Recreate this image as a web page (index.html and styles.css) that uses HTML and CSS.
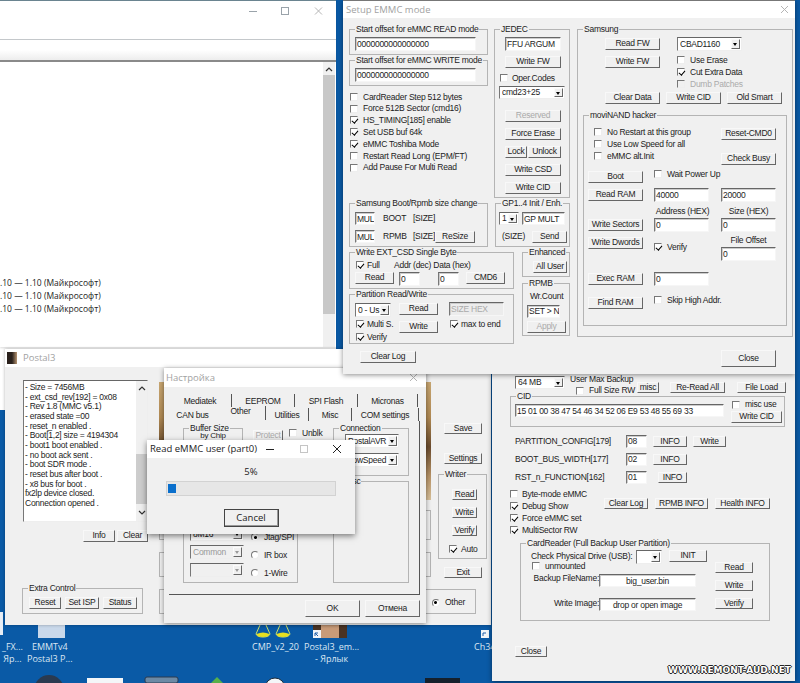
FILE: index.html
```html
<!DOCTYPE html>
<html lang="ru">
<head>
    <meta charset="UTF-8">
    <meta name="viewport" content="width=device-width, initial-scale=1.0">
    <title>Setup EMMC mode</title>
    <link rel="stylesheet" href="styles.css">
</head>
<body>
    <!-- рабочий стол -->
    <svg class="desk-art" width="500" height="73" viewBox="0 610 500 73">
        <rect x="0" y="612" width="3" height="23" fill="#e8eef5"/>
        <rect x="38" y="624" width="27" height="14" fill="#c9d8ea"/>
        <path d="M260 625 L256 634 Q257 637 263 637 Q269 637 270 634 L266 625" fill="none" stroke="#cfe36a"/>
        <path d="M256.500 634 Q263 631 269.500 634 Q269 637 263 637 Q257 637 256.500 634" fill="#e6e020"/>
        <path d="M280 625 L276 634 Q277 637 283 637 Q289 637 290 634 L286 625" fill="none" stroke="#cfe36a"/>
        <path d="M276.500 634 Q283 631 289.500 634 Q289 637 283 637 Q277 637 276.500 634" fill="#e6e020"/>
        <rect x="313" y="625" width="34" height="13" fill="#4a3324"/>
        <rect x="321" y="625" width="18" height="13" fill="#c99b78"/>
        <rect x="313" y="630" width="8" height="8" fill="#f2f5f8"/>
        <path d="M315 636 v-3 h3 M315 633 l3 3" fill="none" stroke="#1f5fa8"/>
        <rect x="481" y="630" width="8" height="8" fill="#f2f5f8"/>
        <path d="M483 636 v-3 h3" fill="none" stroke="#1f5fa8"/>
        <circle cx="49" cy="690" r="15" fill="#2a3a50"/>
        <rect x="87" y="678" width="36" height="5" fill="#f4f6f8"/>
        <rect x="145" y="677" width="33" height="6" rx="2" fill="#6d8aa5" stroke="#2a3a50"/>
        <path d="M217 677 l6 6 h-12 z" fill="#57b04a"/>
        <circle cx="275" cy="688" r="10" fill="#f4f6f8" stroke="#1b2a3a"/>
        <rect x="425" y="678" width="35" height="5" fill="#15202c"/>
    </svg>
    <div class="desk-label label-fx">_FX...<br>Яр...</div>
    <div class="desk-label label-emmt">EMMTv4<br>Postal3 P...</div>
    <div class="desk-label label-cmp">CMP_v2_20</div>
    <div class="desk-label label-postal">Postal3_em...<br>- Ярлык</div>
    <div class="desk-label label-ch">Ch34</div>

    <!-- окно за списком -->
    <div class="window behind"></div>

    <!-- окно со списком -->
    <div class="window explorer">
        <div class="explorer-head">
            <svg class="caption-icon" width="80" height="10" viewBox="0 0 80 10">
                <path d="M1 5.500 h8" stroke="#9aa3aa"/>
                <rect x="33.500" y="1.500" width="7" height="7" fill="none" stroke="#9aa3aa"/>
                <path d="M67 1.500 l7 7 M74 1.500 l-7 7" stroke="#b5b5b5"/>
            </svg>
        </div>
        <div class="explorer-strip"></div>
        <div class="explorer-list">
            <div class="explorer-rows">
                <div>.10 — 1.10 (Майкрософт)</div>
                <div>.10 — 1.10 (Майкрософт)</div>
                <div>.10 — 1.10 (Майкрософт)</div>
            </div>
            <div class="scrollbar">
                <svg class="chev" width="8" height="6" viewBox="0 0 8 6"><path d="M1 5 L4 2 L7 5" fill="none" stroke="#333" stroke-width="1.200"/></svg>
                <div class="scroll-thumb"></div>
            </div>
        </div>
    </div>

    <!-- Postal3 -->
    <div class="window postal">
        <div class="title-bar">
            <span class="postal-icon"></span>
            <span class="title-text">Postal3</span>
        </div>
        <div class="postal-body">
            <div class="postal-left">
                <div class="log">
                    <div class="log-text">
                        - Size = 7456MB<br>
                        - ext_csd_rev[192] = 0x08<br>
                        - Rev 1.8 (MMC v5.1)<br>
                        - erased state =00<br>
                        - reset_n enabled .<br>
                        - Boot[1,2] size = 4194304<br>
                        - boot1 boot enabled .<br>
                        - no boot ack sent .<br>
                        - boot SDR mode .<br>
                        - reset bus after boot .<br>
                        - x8 bus for boot .<br>
                        fx2lp device closed.<br>
                        Connection opened .
                    </div>
                    <div class="log-scroll">
                        <svg class="chev" width="8" height="6" viewBox="0 0 8 6"><path d="M1 5 L4 2 L7 5" fill="none" stroke="#333" stroke-width="1.200"/></svg>
                        <div class="log-thumb"></div>
                        <svg class="chev" width="8" height="6" viewBox="0 0 8 6"><path d="M1 1 L4 4 L7 1" fill="none" stroke="#333" stroke-width="1.200"/></svg>
                    </div>
                </div>
                <div class="log-buttons">
                    <button class="btn w32">Info</button>
                    <button class="btn w31">Clear</button>
                </div>
                <div class="group extra-control">
                    <span class="legend">Extra Control</span>
                    <button class="btn w32">Reset</button>
                    <button class="btn w34">Set ISP</button>
                    <button class="btn w34">Status</button>
                </div>
            </div>
            <div class="postal-main">
                <div class="postal-center">
                    <div class="preview"></div>
                    <div class="ghost-box ghost-a"></div>
                    <div class="ghost-box ghost-b"></div>
                </div>
                <div class="postal-side">
                    <button class="btn w38 side-save">Save</button>
                    <button class="btn w38 side-settings">Settings</button>
                    <div class="group writer">
                        <span class="legend">Writer</span>
                        <button class="btn w25">Read</button>
                        <button class="btn w25">Write</button>
                        <button class="btn w25">Verify</button>
                        <label class="check writer-auto"><input type="checkbox" checked>Auto</label>
                    </div>
                    <button class="btn w38 side-exit">Exit</button>
                </div>
                <div class="ghost-box ghost-c">
                    <label class="check"><input type="radio" checked>Other</label>
                </div>
            </div>
        </div>
    </div>

    <!-- Настройка -->
    <div class="window settings">
        <div class="title-bar settings-title">
            <span class="title-text">Настройка</span>
            <svg width="9" height="9" viewBox="0 0 9 9"><path d="M1 1 L8 8 M8 1 L1 8" stroke="#b5b5b5"/></svg>
        </div>
        <div class="tabs tabs-back">
            <span class="tab w63">Mediatek</span>
            <span class="tab w63">EEPROM</span>
            <span class="tab w63">SPI Flash</span>
            <span class="tab w60">Micronas</span>
        </div>
        <div class="tabs tabs-front">
            <span class="tab w47 tab-plain">CAN bus</span>
            <span class="tab w50 tab-active">Other</span>
            <span class="tab w43">Utilities</span>
            <span class="tab w43">Misc</span>
            <span class="tab w67">COM settings</span>
        </div>
        <div class="tab-panel">
            <div class="panel-left">
                <div class="panel-top">
                    <div class="group buffer">
                        <span class="legend">Buffer Size</span>
                        <div class="buffer-chip">by Chip</div>
                    </div>
                    <button class="btn w30 protect" disabled>Protect</button>
                    <label class="check unblock"><input type="checkbox">Unblk</label>
                </div>
                <div class="group chip-group">
                    <div class="chip-selects">
                        <div class="combo w54"><span class="combo-text">8M16</span><span class="combo-arrow"></span></div>
                        <div class="combo w54 is-disabled"><span class="combo-text">Common</span><span class="combo-arrow"></span></div>
                        <div class="combo w54 is-disabled"><span class="combo-text"></span><span class="combo-arrow"></span></div>
                    </div>
                    <div class="chip-radios">
                        <label class="check"><input type="radio" checked>Jtag/SPI</label>
                        <label class="check"><input type="radio">IR box</label>
                        <label class="check"><input type="radio">1-Wire</label>
                    </div>
                </div>
            </div>
            <div class="panel-right">
                <div class="group connection">
                    <span class="legend">Connection</span>
                    <div class="combo w54"><span class="combo-text">PostalAVR</span><span class="combo-arrow"></span></div>
                    <div class="combo w54"><span class="combo-text">LowSpeed</span><span class="combo-arrow"></span></div>
                </div>
                <div class="group misc-box"><span class="legend">Misc</span></div>
            </div>
        </div>
        <div class="settings-buttons">
            <button class="btn w55 h17">OK</button>
            <button class="btn w55 h17">Отмена</button>
        </div>
    </div>

    <!-- прогресс -->
    <div class="window progress-dialog">
        <div class="progress-title">
            <span>Read eMMC user (part0)</span>
            <svg width="80" height="10" viewBox="0 0 80 10">
                <path d="M4 5.500 h8" stroke="#222"/>
                <rect x="38.500" y="1.500" width="7" height="7" fill="none" stroke="#c5c5c5"/>
                <path d="M71 1 l8 8 M79 1 l-8 8" stroke="#222"/>
            </svg>
        </div>
        <div class="progress-body">
            <div class="progress-label">5%</div>
            <div class="progress-track"><div class="progress-fill" style="width: 5%"></div></div>
            <button class="cancel-btn">Cancel</button>
        </div>
    </div>

    <!-- нижнее окно -->
    <div class="window backup">
        <div class="backup-top">
            <div class="combo w50 h13"><span class="combo-text">64 MB</span><span class="combo-arrow"></span></div>
            <div class="backup-size">
                <div>User Max Backup</div>
                <label class="check full-size"><input type="checkbox">Full Size RW</label>
            </div>
            <button class="btn w22 h11 misc-btn">misc</button>
            <button class="btn w55 h11 reread-btn">Re-Read All</button>
            <button class="btn w49 h11 fileload-btn">File Load</button>
        </div>
        <div class="group cid">
            <span class="legend">CID</span>
            <input class="field cid-field" value="15 01 00 38 47 54 46 34 52 06 E9 53 48 55 69 33">
            <div class="cid-side">
                <label class="check"><input type="checkbox">misc use</label>
                <button class="btn w51">Write CID</button>
            </div>
        </div>
        <div class="regs">
            <span class="reg-name">PARTITION_CONFIG[179]</span>
            <input class="field h13" value="08">
            <button class="btn h11">INFO</button>
            <button class="btn h11">Write</button>
            <span class="reg-name">BOOT_BUS_WIDTH[177]</span>
            <input class="field h13" value="02">
            <button class="btn h11">INFO</button>
            <span></span>
            <span class="reg-name">RST_n_FUNCTION[162]</span>
            <input class="field h13" value="01">
            <button class="btn h11">INFO</button>
        </div>
        <div class="backup-options">
            <div>
                <label class="check"><input type="checkbox">Byte-mode eMMC</label>
                <label class="check"><input type="checkbox" checked>Debug Show</label>
                <label class="check"><input type="checkbox" checked>Force eMMC set</label>
                <label class="check"><input type="checkbox" checked>MultiSector RW</label>
            </div>
            <div class="option-buttons">
                <button class="btn w44 h11">Clear Log</button>
                <button class="btn w53 h11">RPMB INFO</button>
                <button class="btn w55 h11">Health INFO</button>
            </div>
        </div>
        <div class="group card-reader">
            <span class="legend">CardReader (Full Backup User Partition)</span>
            <div class="card-left">
                <div class="card-drive">
                    <span class="card-drive-label">Check Physical Drive (USB):</span>
                    <div class="combo w26 h14"><span class="combo-text"></span><span class="combo-arrow"></span></div>
                    <button class="btn w38">INIT</button>
                </div>
                <label class="check unmounted"><input type="checkbox">unmounted</label>
                <div class="card-file card-backup">
                    <span class="card-file-label">Backup FileName:</span>
                    <input class="field file-field h13" value="big_user.bin">
                </div>
                <div class="card-file card-image">
                    <span class="card-file-label">Write Image:</span>
                    <input class="field file-field h13" value="drop or open image">
                </div>
            </div>
            <div class="card-right">
                <button class="btn w38 h11">Read</button>
                <button class="btn w38 h11">Write</button>
                <button class="btn w38 h11">Verify</button>
            </div>
        </div>
        <button class="btn w32 h11 backup-close">Close</button>
    </div>

    <!-- Setup EMMC mode -->
    <div class="window setup">
        <div class="title-bar setup-title">
            <span class="title-text">Setup EMMC mode</span>
            <svg width="9" height="9" viewBox="0 0 9 9"><path d="M1 1 L8 8 M8 1 L1 8" stroke="#b5b5b5"/></svg>
        </div>
        <div class="setup-body">
            <div class="setup-left">
                <div class="setup-row-one">
                    <div class="offsets">
                        <div class="group offset-group">
                            <span class="legend">Start offset for eMMC READ mode</span>
                            <input class="field offset-field" value="0000000000000000">
                        </div>
                        <div class="group offset-group offset-write">
                            <span class="legend">Start offset for eMMC WRITE mode</span>
                            <input class="field offset-field" value="0000000000000000">
                        </div>
                        <div class="offset-checks">
                            <label class="check"><input type="checkbox">CardReader Step 512 bytes</label>
                            <label class="check"><input type="checkbox">Force 512B Sector (cmd16)</label>
                            <label class="check"><input type="checkbox" checked>HS_TIMING[185] enable</label>
                            <label class="check"><input type="checkbox" checked>Set USB buf 64k</label>
                            <label class="check"><input type="checkbox" checked>eMMC Toshiba Mode</label>
                            <label class="check"><input type="checkbox">Restart Read Long (EPM/FT)</label>
                            <label class="check"><input type="checkbox">Add Pause For Multi Read</label>
                        </div>
                    </div>
                    <div class="group jedec">
                        <span class="legend">JEDEC</span>
                        <input class="field jedec-field" value="FFU ARGUM">
                        <button class="btn w56 jedec-write">Write FW</button>
                        <label class="check jedec-codes"><input type="checkbox">Oper.Codes</label>
                        <div class="combo w66 h13 jedec-combo"><span class="combo-text">cmd23+25</span><span class="combo-arrow"></span></div>
                        <button class="btn w56 jedec-reserved" disabled>Reserved</button>
                        <button class="btn w56 jedec-gap">Force Erase</button>
                        <div class="lock-row jedec-gap">
                            <button class="btn w22">Lock</button>
                            <button class="btn w33">Unlock</button>
                        </div>
                        <button class="btn w56 jedec-gap">Write CSD</button>
                        <button class="btn w56 jedec-gap">Write CID</button>
                    </div>
                </div>
                <div class="setup-row-two">
                    <div class="group samsung-boot">
                        <span class="legend">Samsung Boot/Rpmb size change</span>
                        <input class="field h13" value="MUL">
                        <span>BOOT</span>
                        <span>[SIZE]</span>
                        <span></span>
                        <input class="field h13" value="MUL">
                        <span>RPMB</span>
                        <span>[SIZE]</span>
                        <button class="btn w40">ReSize</button>
                    </div>
                    <div class="group gp-init">
                        <span class="legend">GP1..4 Init / Enh.</span>
                        <div class="combo w20 h13"><span class="combo-text">1</span><span class="combo-arrow"></span></div>
                        <input class="field h13 gp-field" value="GP MULT">
                        <span class="gp-size">(SIZE)</span>
                        <button class="btn w35 gp-send">Send</button>
                    </div>
                </div>
                <div class="setup-row-three">
                    <div class="ext-stack">
                        <div class="group ext-csd">
                            <span class="legend">Write EXT_CSD Single Byte</span>
                            <div class="ext-head">
                                <label class="check"><input type="checkbox" checked>Full</label>
                                <span class="ext-caption">Addr (dec) Data (hex)</span>
                            </div>
                            <div class="ext-controls">
                                <button class="btn w39">Read</button>
                                <input class="field ext-field" value="0">
                                <input class="field ext-field ext-data" value="0">
                                <button class="btn w39 ext-cmd">CMD6</button>
                            </div>
                        </div>
                        <div class="group partition">
                            <span class="legend">Partition Read/Write</span>
                            <div class="combo w36 h14"><span class="combo-text">0 - Us</span><span class="combo-arrow"></span></div>
                            <button class="btn w39">Read</button>
                            <input class="field size-field" value="SIZE HEX" disabled>
                            <label class="check"><input type="checkbox" checked>Multi S.</label>
                            <button class="btn w39 partition-write">Write</button>
                            <label class="check"><input type="checkbox" checked>max to end</label>
                            <label class="check"><input type="checkbox" checked>Verify</label>
                        </div>
                        <button class="btn w56 clear-log">Clear Log</button>
                    </div>
                    <div class="small-stack">
                        <div class="group enhanced">
                            <span class="legend">Enhanced</span>
                            <button class="btn w34">All User</button>
                        </div>
                        <div class="group rpmb">
                            <span class="legend">RPMB</span>
                            <div class="rpmb-count">Wr.Count</div>
                            <input class="field rpmb-field h13" value="SET &gt; N">
                            <button class="btn w39 rpmb-apply" disabled>Apply</button>
                        </div>
                    </div>
                </div>
            </div>
            <div class="setup-right">
                <div class="group samsung">
                    <span class="legend">Samsung</span>
                    <div class="samsung-top">
                        <div class="samsung-fw">
                            <button class="btn w55">Read FW</button>
                            <button class="btn w55">Write FW</button>
                        </div>
                        <div class="samsung-opts">
                            <div class="combo w65 h14"><span class="combo-text">CBAD1160</span><span class="combo-arrow"></span></div>
                            <div class="samsung-checks">
                                <label class="check"><input type="checkbox">Use Erase</label>
                                <label class="check"><input type="checkbox" checked>Cut Extra Data</label>
                                <label class="check is-disabled"><input type="checkbox" disabled>Dumb Patches</label>
                            </div>
                        </div>
                    </div>
                    <div class="samsung-actions">
                        <button class="btn w55">Clear Data</button>
                        <button class="btn w55">Write CID</button>
                        <button class="btn w55">Old Smart</button>
                    </div>
                    <div class="group movinand">
                        <span class="legend">moviNAND hacker</span>
                        <div class="movi-top">
                            <div class="movi-checks">
                                <label class="check"><input type="checkbox">No Restart at this group</label>
                                <label class="check"><input type="checkbox">Use Low Speed for all</label>
                                <label class="check"><input type="checkbox">eMMC alt.Init</label>
                            </div>
                            <div class="movi-side">
                                <button class="btn w55">Reset-CMD0</button>
                                <button class="btn w55">Check Busy</button>
                            </div>
                        </div>
                        <div class="movi-grid">
                            <button class="btn w55">Boot</button>
                            <label class="check nudge-up span-two"><input type="checkbox">Wait Power Up</label>

                            <button class="btn w55 nudge-down">Read RAM</button>
                            <input class="field w55" value="40000">
                            <input class="field w55" value="20000">

                            <span></span>
                            <span class="movi-caption">Address (HEX)</span>
                            <span class="movi-caption">Size (HEX)</span>

                            <button class="btn w55 nudge-down">Write Sectors</button>
                            <input class="field w55" value="0">
                            <input class="field w55" value="0">

                            <button class="btn w55">Write Dwords</button>
                            <label class="check movi-verify"><input type="checkbox" checked>Verify</label>
                            <div class="movi-offset">
                                <span class="movi-caption">File Offset</span>
                                <input class="field w55" value="0">
                            </div>

                            <button class="btn w55 nudge-down">Exec RAM</button>
                            <input class="field w55" value="0">
                            <span></span>

                            <button class="btn w55">Find RAM</button>
                            <label class="check nudge-up span-two"><input type="checkbox">Skip High Addr.</label>
                        </div>
                    </div>
                </div>
                <button class="btn w55 h17 setup-close">Close</button>
            </div>
        </div>
    </div>

    <div class="watermark">WWW.REMONT-AUD.NET</div>
</body>
</html>
```

FILE: styles.css
```css
* {
    margin: 0;
    padding: 0;
    box-sizing: border-box;
}

body {
    position: relative;
    width: 800px;
    height: 683px;
    overflow: hidden;
    background: #0a5aa6;
    font-family: 'Liberation Sans', Arial, sans-serif;
    font-size: 8.5px;
    letter-spacing: -0.25px;
    line-height: 1;
    color: #1c1c1c;
}

/* окна на рабочем столе */
.window {
    position: absolute;
    background: #f0f0f0;
    box-shadow: 0 1px 5px rgba(0, 0, 0, 0.45);
}

.behind { left: 0; top: 340px; width: 336px; height: 70px; background: #fff; box-shadow: none; }
.explorer { left: 0; top: 0; width: 336px; height: 347px; background: #fff; border-top: 1px solid #6a8490; display: flex; flex-direction: column; box-shadow: 0 1px 2px rgba(0, 0, 0, 0.15); }
.postal { left: 5px; top: 349px; width: 486px; height: 276px; box-shadow: 0 0 3px rgba(0, 0, 0, 0.3); }
.settings { left: 164px; top: 368px; width: 262px; height: 255px; }
.progress-dialog { left: 147px; top: 440px; width: 208px; height: 94px; box-shadow: 0 2px 6px rgba(0, 0, 0, 0.5); }
.backup { left: 492px; top: 374px; width: 303px; height: 307px; padding-top: 2px; }
.setup { left: 343px; top: 0; width: 452px; height: 374px; border-top: 1px solid #777; }

.title-bar {
    display: flex;
    align-items: center;
    height: 18px;
    background: #fff;
}

.title-text {
    font-family: 'Open Sans', 'Liberation Sans', sans-serif;
    font-size: 9.5px;
    letter-spacing: 0;
    color: #a2a2a2;
}

/* общие контролы */
.btn {
    display: block;
    flex: none;
    height: 12px;
    padding: 0 0 1px;
    background: #f0f0f0;
    border: 1px solid;
    border-color: #f8f8f8 #666 #666 #f8f8f8;
    font: inherit;
    letter-spacing: inherit;
    color: #1c1c1c;
    white-space: nowrap;
}

.btn:disabled {
    color: #aaa;
}

.field {
    display: block;
    width: 100%;
    height: 14px;
    padding: 0 0 0 1px;
    background: #fff;
    border: 1px solid;
    border-color: #666 #f6f6f6 #f6f6f6 #777;
    box-shadow: inset 1px 1px 0 #ccc;
    font: inherit;
    letter-spacing: inherit;
    color: #1c1c1c;
}

.field:disabled {
    background: #ececec;
    color: #aaa;
}

.group {
    position: relative;
    border: 1px solid #b4b4b4;
}

.legend {
    position: absolute;
    top: -5px;
    left: 5px;
    padding: 0 1px;
    background: #f0f0f0;
    white-space: nowrap;
}

.check {
    display: flex;
    align-items: center;
    gap: 5px;
    height: 12px;
    white-space: nowrap;
}

.check input {
    appearance: none;
    flex: none;
    position: relative;
    width: 8px;
    height: 8px;
    background: #fff;
    border: 1px solid;
    border-color: #777 #eee #eee #777;
}

.check input:checked::after {
    content: "";
    position: absolute;
    left: 1.500px;
    top: -0.500px;
    width: 2.500px;
    height: 5px;
    border: solid #000;
    border-width: 0 1.500px 1.500px 0;
    transform: rotate(40deg);
}

.check input[type="radio"] {
    border-radius: 50%;
}

.check input[type="radio"]:checked::after {
    left: 1.500px;
    top: 1.500px;
    width: 3px;
    height: 3px;
    background: #000;
    border: 0;
    border-radius: 50%;
}

.check.is-disabled {
    color: #ababab;
}

.check input:disabled {
    background: #f0f0f0;
}

.combo {
    display: flex;
    align-items: center;
    flex: none;
    height: 14px;
    padding: 1px 1px 1px 2px;
    background: #fff;
    border: 1px solid;
    border-color: #666 #eee #eee #777;
    white-space: nowrap;
}

.combo-text {
    flex: 1;
    overflow: hidden;
}

.combo-arrow {
    position: relative;
    flex: none;
    width: 9px;
    height: 100%;
    background: #f0f0f0;
    border: 1px solid;
    border-color: #fbfbfb #666 #666 #fbfbfb;
}

.combo-arrow::after {
    content: "";
    position: absolute;
    left: 1px;
    top: 50%;
    margin-top: -1px;
    border: 2.500px solid transparent;
    border-top: 3px solid #000;
    border-bottom: 0;
}

.combo.is-disabled {
    background: #f0f0f0;
    color: #999;
}

.combo.is-disabled .combo-arrow::after {
    border-top-color: #999;
}

/* ширины и высоты */
.w20 { width: 20px; }
.w22 { width: 22px; }
.w25 { width: 25px; }
.w26 { width: 26px; }
.w30 { width: 30px; }
.w31 { width: 31px; }
.w32 { width: 32px; }
.w33 { width: 33px; }
.w34 { width: 34px; }
.w35 { width: 35px; }
.w36 { width: 36px; }
.w38 { width: 38px; }
.w39 { width: 39px; }
.w40 { width: 40px; }
.w43 { width: 43px; }
.w44 { width: 44px; }
.w47 { width: 47px; }
.w49 { width: 49px; }
.w50 { width: 50px; }
.w51 { width: 51px; }
.w53 { width: 53px; }
.w54 { width: 54px; }
.w55 { width: 55px; }
.w56 { width: 56px; }
.w60 { width: 60px; }
.w63 { width: 63px; }
.w65 { width: 65px; }
.w66 { width: 66px; }
.w67 { width: 67px; }
.h11 { height: 11px; }
.h13 { height: 13px; }
.h14 { height: 14px; }
.h17 { height: 17px; }

/* рабочий стол */
.desk-art {
    position: absolute;
    left: 0;
    top: 610px;
}

.desk-label {
    position: absolute;
    top: 641px;
    font-family: 'Open Sans', 'Liberation Sans', sans-serif;
    font-size: 9px;
    letter-spacing: 0;
    line-height: 12px;
    color: #dbe7f3;
    text-align: center;
    white-space: nowrap;
}

.label-fx { left: 2px; }
.label-emmt { left: 27px; }
.label-cmp { left: 252px; }
.label-postal { left: 304px; }
.label-ch { left: 474px; }

.watermark {
    position: absolute;
    left: 668px;
    top: 666px;
    font-family: 'DejaVu Sans', sans-serif;
    font-size: 9px;
    font-weight: bold;
    letter-spacing: 0;
    color: #fff;
    text-shadow: -1px 0 0 #222, 1px 0 0 #222, 0 -1px 0 #222, 0 1px 0 #222;
}

/* окно со списком */
.explorer-head {
    display: flex;
    justify-content: flex-end;
    height: 39px;
    padding: 5px 0 0;
    border-bottom: 1px solid #c4c8cb;
}

.caption-icon {
    margin-right: 8px;
}

.explorer-strip {
    height: 22px;
    background: linear-gradient(#fff 50%, #ededed);
    border-bottom: 2px solid #8a8a8a;
}

.explorer-list {
    flex: 1;
    display: flex;
    min-height: 0;
}

.explorer-rows {
    flex: 1;
    padding-top: 214px;
    font-family: 'Open Sans', 'Liberation Sans', sans-serif;
    font-size: 8.500px;
    letter-spacing: 0;
    line-height: 13px;
    color: #222;
}

.scrollbar {
    width: 12px;
    margin-right: 1px;
    background: #f0f0f0;
    text-align: center;
}

.chev {
    display: block;
    margin: 0 auto;
}

.scrollbar .chev {
    margin-top: 4px;
    margin-bottom: 3px;
}

.scroll-thumb {
    height: 239px;
    background: #c8c8c8;
}

/* Postal3 */
.postal-icon {
    width: 10px;
    height: 12px;
    margin: 0 6px 0 2px;
    background: linear-gradient(90deg, #2a211c 50%, #b59370);
}

.postal-body {
    display: flex;
    padding-top: 13px;
}

.postal-left {
    width: 137px;
    margin-left: 18px;
    flex: none;
}

.log {
    display: flex;
    width: 125px;
    height: 142px;
    background: #fff;
    border: 1px solid;
    border-color: #666 #eee #eee #777;
}

.log-text {
    flex: 1;
    padding: 2px 0 0 1px;
    line-height: 9.660px;
    white-space: nowrap;
}

.log-scroll {
    display: flex;
    flex-direction: column;
    width: 11px;
    background: #f0f0f0;
}

.log-scroll .chev {
    margin-top: 4px;
}

.log-thumb {
    height: 50px;
    margin-top: 63px;
    margin-bottom: 2px;
    background: #cdcdcd;
}

.log-buttons {
    display: flex;
    justify-content: flex-end;
    gap: 2px;
    width: 125px;
    margin-top: 8px;
}

.extra-control {
    display: flex;
    gap: 4px;
    width: 121px;
    height: 26px;
    margin: 46px 0 0 -1px;
    padding: 8px 0 0 6px;
}

.postal-main {
    display: grid;
    grid-template-columns: 272px 48px;
    column-gap: 7px;
    margin-left: -1px;
}

.postal-center {
    padding-top: 2px;
}

.preview {
    height: 118px;
    background: linear-gradient(#c9a772 0%, #b18a54 30%, #6b4c2e 55%, #b89468 80%, #d8c09a 100%);
}

.ghost-box {
    border: 1px solid #b4b4b4;
}

.ghost-a {
    height: 30px;
    margin-top: 10px;
}

.ghost-b {
    height: 25px;
    margin-top: 12px;
}

.ghost-c {
    grid-column: 1 / 3;
    display: flex;
    justify-content: flex-end;
    align-items: center;
    width: 317px;
    height: 25px;
    margin-top: 11px;
    padding: 2px 10px 0 0;
}

.postal-side {
    padding-top: 43px;
}

.postal-side .btn {
    margin-left: 6px;
    height: 11px;
}

.side-settings {
    margin-top: 19px;
}

.writer {
    display: flex;
    flex-direction: column;
    width: 49px;
    height: 85px;
    margin-top: 10px;
    padding: 14px 0 0 13px;
    gap: 7px;
}

.writer .btn {
    margin-left: 0;
}

.writer-auto {
    margin: 0 0 0 -3px;
    gap: 4px;
}

.side-exit {
    margin-top: 8px;
}

/* Настройка */
.settings-title {
    justify-content: space-between;
    padding: 0 8px 0 2px;
    height: 19px;
}

.tabs {
    display: flex;
    padding-left: 5px;
}

.tab {
    display: block;
    height: 13px;
    padding-top: 3px;
    border-right: 1px solid #555;
    text-align: center;
    white-space: nowrap;
}

.tabs-back {
    margin-top: 7px;
}

.tabs-front {
    margin-top: 1px;
}

.tab-plain {
    border-right: 0;
}

.tab-active {
    height: 14px;
    margin-top: -2px;
    padding-top: 1px;
}

.tab-panel {
    display: flex;
    width: 251px;
    height: 174px;
    margin-left: 5px;
    padding: 7px 0 0 14px;
    border-right: 1px solid #555;
    border-bottom: 1px solid #555;
}

.panel-left {
    width: 115px;
}

.panel-top {
    display: flex;
    height: 102px;
}

.buffer {
    width: 60px;
    flex: none;
}

.buffer-chip {
    padding-top: 3px;
    font-size: 8px;
    text-align: center;
}

.protect {
    margin: 2px 0 0 10px;
}

.unblock {
    margin: -1px 0 0 6px;
}

.chip-group {
    display: flex;
    height: 53px;
    padding-left: 6px;
}

.chip-selects {
    display: flex;
    flex-direction: column;
    gap: 4px;
    margin-top: -4px;
}

.chip-radios {
    display: flex;
    flex-direction: column;
    gap: 6px;
    margin: 0 0 0 7px;
}

.panel-right {
    margin-left: 35px;
    width: 76px;
}

.connection {
    display: flex;
    flex-direction: column;
    gap: 5px;
    height: 48px;
    padding: 5px 0 0 11px;
}

.misc-box {
    height: 102px;
    margin-top: 5px;
}

.misc-box .legend {
    left: 9px;
}

.settings-buttons {
    display: flex;
    justify-content: flex-end;
    gap: 5px;
    padding: 5px 6px 0 0;
}

/* прогресс */
.progress-title {
    display: flex;
    align-items: center;
    justify-content: space-between;
    height: 18px;
    padding: 0 13px 0 3px;
    background: #fff;
    font-family: 'Open Sans', 'Liberation Sans', sans-serif;
    font-size: 9.500px;
    letter-spacing: 0;
    color: #222;
}

.progress-body {
    display: flex;
    flex-direction: column;
    align-items: center;
    padding-top: 9px;
    font-family: 'Open Sans', 'Liberation Sans', sans-serif;
    font-size: 9.500px;
    letter-spacing: 0;
}

.progress-track {
    width: 170px;
    height: 15px;
    margin-top: 4px;
    background: #e6e6e6;
    border: 1px solid #d2d2d2;
    padding: 2px 1px;
}

.progress-fill {
    height: 100%;
    min-width: 8px;
    background: #0a6fcc;
}

.cancel-btn {
    width: 55px;
    height: 18px;
    margin-top: 13px;
    background: #f0f0f0;
    border: 1px solid #444;
    box-shadow: inset -1px -1px 0 #999;
    font: inherit;
    letter-spacing: inherit;
    color: #222;
}

/* нижнее окно */
.backup-top {
    display: flex;
    align-items: flex-start;
    height: 20px;
    padding-left: 23px;
}

.backup-size {
    width: 67px;
    margin: -1px 0 0 5px;
}

.full-size {
    margin: 1px 0 0 6px;
}

.misc-btn {
    margin: 6px 0 0 0;
}

.reread-btn {
    margin: 6px 0 0 11px;
}

.fileload-btn {
    margin: 6px 0 0 12px;
}

.cid {
    display: flex;
    width: 275px;
    height: 31px;
    margin: 0 0 0 18px;
    padding: 7px 0 0 4px;
}

.cid-field {
    width: 209px;
    height: 13px;
}

.cid-side {
    margin-left: 7px;
    margin-top: -7px;
}

.cid-side .check {
    margin-left: 1px;
    height: 13px;
    margin-top: 1px;
}

.regs {
    display: grid;
    grid-template-columns: 105px 21px 34px 33px;
    grid-auto-rows: 18px;
    column-gap: 6px;
    align-items: center;
    margin: 5px 0 0 23px;
}

.regs .btn:last-child {
    margin-left: 5px;
}

.backup-options {
    display: flex;
    margin: 2px 0 0 18px;
}

.option-buttons {
    display: flex;
    gap: 7px;
    margin: 10px 0 0 17px;
}

.backup-options .check {
    gap: 4px;
}

.card-reader {
    display: flex;
    width: 250px;
    height: 78px;
    margin: 7px 0 0 28px;
    padding: 6px 0 0 10px;
}

.card-left {
    width: 184px;
    flex: none;
}

.card-drive {
    display: flex;
    gap: 7px;
}

.card-drive-label {
    width: 99px;
    flex: none;
    padding-top: 2px;
    white-space: nowrap;
}

.card-drive .combo {
    margin-left: -1px;
}

.unmounted {
    margin: -4px 0 0 1px;
}

.card-file {
    display: flex;
    align-items: flex-start;
}

.card-file-label {
    width: 68px;
    flex: none;
    text-align: right;
    white-space: nowrap;
}

.card-backup {
    margin-top: 2px;
}

.card-image {
    margin-top: 11px;
}

.card-image .card-file-label {
    padding-top: 1px;
}

.file-field {
    width: 97px;
    padding: 0;
    text-align: center;
}

.card-right {
    display: flex;
    flex-direction: column;
    gap: 7px;
    padding-top: 12px;
}

.backup-close {
    margin: 25px 0 0 23px;
}

/* Setup EMMC mode */
.setup-title {
    justify-content: space-between;
    height: 17px;
    padding: 0 6px 0 3px;
}

.setup-body {
    display: flex;
    gap: 7px;
    padding: 11px 0 0 6px;
}

.setup-left {
    width: 221px;
    flex: none;
}

.setup-row-one {
    display: flex;
    gap: 6px;
    height: 174px;
}

.offsets {
    width: 139px;
    flex: none;
}

.offset-group {
    height: 26px;
    padding: 7px 0 0 5px;
}

.offset-write {
    margin-top: 5px;
}

.offset-field {
    width: 121px;
}

.offset-checks {
    margin: 5px 0 0 1px;
}

.offset-checks .check {
    height: 11.800px;
}

.jedec {
    display: flex;
    flex-direction: column;
    align-items: flex-start;
    width: 76px;
    height: 169px;
    padding: 7px 0 0 10px;
}

.jedec-field {
    width: 56px;
}

.jedec-write {
    margin-top: 5px;
}

.jedec-codes {
    margin: 4px 0 0 -5px;
    gap: 4px;
}

.jedec-combo {
    margin: 2px 0 0 -6px;
}

.jedec-reserved {
    margin-top: 11px;
}

.jedec-gap {
    margin-top: 6px;
}

.lock-row {
    display: flex;
    gap: 1px;
}

.setup-row-two {
    display: flex;
    gap: 7px;
}

.samsung-boot {
    display: grid;
    grid-template-columns: 20px 30px 30px 40px;
    grid-template-rows: 13px 13px;
    row-gap: 5px;
    align-items: center;
    width: 139px;
    height: 44px;
    padding: 8px 0 0 5px;
}

.samsung-boot input {
    width: 20px;
}

.samsung-boot span:not(.legend) {
    margin-left: 8px;
}

.samsung-boot span:empty {
    margin: 0;
}

.gp-init {
    display: grid;
    grid-template-columns: 20px 43px;
    grid-template-rows: 13px 13px;
    column-gap: 3px;
    row-gap: 5px;
    align-items: center;
    width: 75px;
    height: 44px;
    padding: 8px 0 0 3px;
}

.gp-field {
    width: 43px;
}

.gp-size {
    margin-left: 3px;
    white-space: nowrap;
}

.gp-send {
    margin-left: 10px;
}

.setup-row-three {
    display: flex;
    gap: 8px;
    margin-top: 5px;
}

.ext-stack {
    width: 165px;
    flex: none;
}

.ext-csd {
    height: 37px;
    padding: 6px 0 0 6px;
}

.ext-head {
    display: flex;
    height: 12px;
    align-items: center;
}

.ext-head .check {
    width: 38px;
    gap: 3px;
}

.ext-caption {
    white-space: nowrap;
}

.ext-controls {
    display: flex;
    align-items: flex-start;
    margin: 1px 0 0 -1px;
}

.ext-field {
    width: 21px;
    margin-left: 5px;
}

.ext-data {
    margin-left: 18px;
}

.ext-cmd {
    margin-left: 7px;
}

.partition {
    display: grid;
    grid-template-columns: 44px 50px 55px;
    grid-template-rows: 15px 13px 12px;
    align-items: start;
    height: 50px;
    margin-top: 5px;
    padding: 8px 0 0 5px;
}

.partition .check {
    margin-left: 1px;
    gap: 3px;
}

.partition-write {
    margin-top: 3px;
}

.size-field {
    margin-top: -1px;
    width: 55px;
}

.partition .check:last-child {
    grid-column: 1 / 3;
}

.clear-log {
    margin: 7px 0 0 11px;
}

.small-stack {
    width: 48px;
    flex: none;
}

.enhanced {
    height: 25px;
    padding: 8px 0 0 10px;
}

.rpmb {
    height: 53px;
    margin-top: 6px;
    padding: 8px 0 0 4px;
}

.rpmb-count {
    padding-left: 3px;
    white-space: nowrap;
}

.rpmb-field {
    width: 33px;
    margin-top: 4px;
}

.rpmb-apply {
    margin-top: 3px;
}

.setup-right {
    width: 216px;
    flex: none;
}

.samsung {
    height: 308px;
    padding-top: 8px;
}

.samsung-top {
    display: flex;
    height: 52px;
    padding-left: 27px;
}

.samsung-fw {
    display: flex;
    flex-direction: column;
    gap: 6px;
    width: 72px;
    flex: none;
}

.samsung-opts .combo {
    margin-top: -1px;
}

.samsung-checks {
    margin-top: 3px;
}

.samsung-actions {
    display: flex;
    gap: 6px;
    margin-top: 2px;
    padding-left: 27px;
}

.movinand {
    width: 204px;
    height: 211px;
    margin: 11px 0 0 5px;
}

.movi-top {
    display: flex;
    justify-content: space-between;
    height: 55px;
    padding: 10px 10px 0 10px;
}

.movi-side {
    display: flex;
    flex-direction: column;
    gap: 13px;
    padding-top: 2px;
}

.movi-grid {
    display: grid;
    grid-template-columns: 66px 67px 55px;
    grid-template-rows: 17px 16px 14px 19px 35px 25px 12px;
    padding-left: 4px;
    align-items: start;
}

.nudge-down {
    margin-top: 1px;
}

.nudge-up {
    margin-top: -3px;
}

.span-two {
    grid-column: 2 / 4;
}

.movi-caption {
    display: block;
    text-align: center;
    white-space: nowrap;
}

.movi-grid > .movi-caption {
    align-self: center;
    padding-right: 10px;
}

.movi-grid > .movi-caption:nth-of-type(3) {
    padding-right: 0;
}

.movi-verify {
    margin-top: 4px;
}

.movi-offset {
    margin-top: -1px;
}

.movi-offset .movi-caption {
    height: 11px;
}

.setup-close {
    margin: 13px 0 0 144px;
}
```
